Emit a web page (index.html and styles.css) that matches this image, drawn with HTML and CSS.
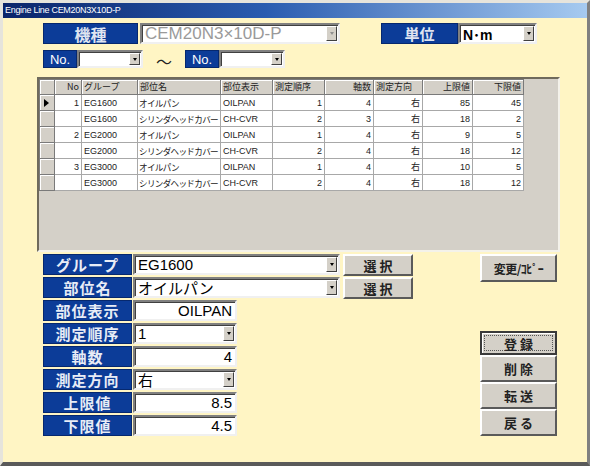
FILE: index.html
```html
<!DOCTYPE html>
<html lang="ja">
<head>
  <meta charset="UTF-8">
  <title>Engine Line</title>
  <link rel="stylesheet" href="styles.css">
</head>
<body>
  <div class="window">
    <div class="titlebar">Engine Line CEM20N3X10D-P</div>
    <div class="client">

      <!-- model / unit -->
      <div class="row-head">
        <div class="label label-model">機種</div>
        <div class="combo combo-model disabled">
          <span class="combo-text">CEM20N3×10D-P</span>
          <span class="drop"></span>
        </div>
        <div class="label label-unit">単位</div>
        <div class="combo combo-unit">
          <span class="combo-text">N･m</span>
          <span class="drop"></span>
        </div>
      </div>

      <!-- No. range -->
      <div class="row-range">
        <div class="label label-no">No.</div>
        <div class="combo combo-no"><span class="combo-text"></span><span class="drop"></span></div>
        <div class="tilde">〜</div>
        <div class="label label-no">No.</div>
        <div class="combo combo-no"><span class="combo-text"></span><span class="drop"></span></div>
      </div>

      <!-- grid -->
      <div class="grid">
        <table class="sheet">
          <colgroup>
            <col style="width:15px"><col style="width:27px"><col style="width:56px"><col style="width:83px">
            <col style="width:52px"><col style="width:52px"><col style="width:49px"><col style="width:49px">
            <col style="width:50px"><col style="width:51px">
          </colgroup>
          <thead>
            <tr>
              <th class="sel"></th>
              <th class="r">No</th>
              <th>グループ</th>
              <th>部位名</th>
              <th>部位表示</th>
              <th>測定順序</th>
              <th class="r">軸数</th>
              <th>測定方向</th>
              <th class="r">上限値</th>
              <th class="r">下限値</th>
            </tr>
          </thead>
          <tbody>
            <tr>
              <td class="sel"><span class="pointer"></span></td>
              <td class="r">1</td><td>EG1600</td><td>オイルパン</td><td>OILPAN</td>
              <td class="r">1</td><td class="r">4</td><td class="r">右</td><td class="r">85</td><td class="r">45</td>
            </tr>
            <tr>
              <td class="sel"></td>
              <td class="r"></td><td>EG1600</td><td>シリンダヘッドカバー</td><td>CH-CVR</td>
              <td class="r">2</td><td class="r">3</td><td class="r">右</td><td class="r">18</td><td class="r">2</td>
            </tr>
            <tr>
              <td class="sel"></td>
              <td class="r">2</td><td>EG2000</td><td>オイルパン</td><td>OILPAN</td>
              <td class="r">1</td><td class="r">4</td><td class="r">右</td><td class="r">9</td><td class="r">5</td>
            </tr>
            <tr>
              <td class="sel"></td>
              <td class="r"></td><td>EG2000</td><td>シリンダヘッドカバー</td><td>CH-CVR</td>
              <td class="r">2</td><td class="r">4</td><td class="r">右</td><td class="r">18</td><td class="r">12</td>
            </tr>
            <tr>
              <td class="sel"></td>
              <td class="r">3</td><td>EG3000</td><td>オイルパン</td><td>OILPAN</td>
              <td class="r">1</td><td class="r">4</td><td class="r">右</td><td class="r">10</td><td class="r">5</td>
            </tr>
            <tr>
              <td class="sel"></td>
              <td class="r"></td><td>EG3000</td><td>シリンダヘッドカバー</td><td>CH-CVR</td>
              <td class="r">2</td><td class="r">4</td><td class="r">右</td><td class="r">18</td><td class="r">12</td>
            </tr>
          </tbody>
        </table>
      </div>

      <!-- detail form -->
      <div class="detail">
        <div class="form">
          <div class="form-row">
            <div class="label label-field">グループ</div>
            <div class="combo field-wide"><span class="combo-text">EG1600</span><span class="drop"></span></div>
            <button class="btn btn-select">選 択</button>
          </div>
          <div class="form-row">
            <div class="label label-field">部位名</div>
            <div class="combo field-wide"><span class="combo-text">オイルパン</span><span class="drop"></span></div>
            <button class="btn btn-select">選 択</button>
          </div>
          <div class="form-row">
            <div class="label label-field">部位表示</div>
            <div class="textbox field-short">OILPAN</div>
          </div>
          <div class="form-row">
            <div class="label label-field">測定順序</div>
            <div class="combo field-short"><span class="combo-text">1</span><span class="drop"></span></div>
          </div>
          <div class="form-row">
            <div class="label label-field">軸数</div>
            <div class="textbox field-short">4</div>
          </div>
          <div class="form-row">
            <div class="label label-field">測定方向</div>
            <div class="combo field-short"><span class="combo-text">右</span><span class="drop"></span></div>
          </div>
          <div class="form-row">
            <div class="label label-field">上限値</div>
            <div class="textbox field-short">8.5</div>
          </div>
          <div class="form-row">
            <div class="label label-field">下限値</div>
            <div class="textbox field-short">4.5</div>
          </div>
        </div>

        <div class="actions">
          <button class="btn btn-copy">変更/ｺﾋﾟｰ</button>
          <div class="btn-stack">
            <button class="btn btn-default"><span class="focus">登 録</span></button>
            <button class="btn">削 除</button>
            <button class="btn">転 送</button>
            <button class="btn">戻 る</button>
          </div>
        </div>
      </div>

    </div>
  </div>
</body>
</html>
```

FILE: styles.css
```css
/* reset */
* {
  margin: 0;
  padding: 0;
  box-sizing: border-box;
}

body {
  background: #fff;
  font-family: "Noto Sans CJK JP", "Liberation Sans", sans-serif;
}

/* window frame */
.window {
  width: 590px;
  height: 466px;
  background: #fff5c4;
  border: 3px solid #e6e4dc;
  border-right: 3px solid #808080;
  border-bottom: 4px solid #5a5a5a;
  overflow: hidden;
}

.titlebar {
  height: 15px;
  background: linear-gradient(to right, #0a246a 0%, #2a5cb0 45%, #a6caf0 100%);
  color: #fff;
  font-family: "Liberation Sans", sans-serif;
  font-size: 9px;
  line-height: 15px;
  padding-left: 2px;
  letter-spacing: -0.3px;
}

.client {
  padding: 5px 0 0 34px;
}

/* blue captions */
.label {
  background: #0c3c98;
  color: #fff;
  font-weight: bold;
  display: flex;
  align-items: center;
  justify-content: center;
  border: 1px solid #06286e;
}

/* combo boxes and text boxes */
.combo,
.textbox {
  background: #fff;
  border: 2px solid;
  border-color: #808080 #f0f0f0 #f0f0f0 #808080;
  box-shadow: inset 1px 1px 0 #404040;
  display: flex;
  align-items: center;
  font-family: "Liberation Sans", "Noto Sans CJK JP", sans-serif;
  color: #000;
}

.combo-text {
  flex: 1;
  padding-left: 3px;
  white-space: nowrap;
  overflow: hidden;
}

.drop {
  width: 11px;
  align-self: stretch;
  margin: 1px 1px 1px 0;
  background: #d4d0c8;
  border: 1px solid;
  border-color: #fff #404040 #404040 #fff;
  display: flex;
  align-items: center;
  justify-content: center;
}

.drop::after {
  content: "";
  border-left: 2px solid transparent;
  border-right: 2px solid transparent;
  border-top: 3px solid #000;
}

.textbox {
  justify-content: flex-end;
  padding-right: 3px;
}

/* top rows */
.row-head {
  display: flex;
  height: 21px;
  margin-left: 6px;
}

.label-model {
  width: 95px;
  font-size: 16px;
  color: #dfe4f0;
}

.combo-model {
  width: 200px;
  margin-left: 2px;
  font-size: 17px;
}

.combo-model.disabled .combo-text {
  color: #9a9a9a;
}

.combo-model.disabled .drop::after {
  border-top-color: #909090;
}

.label-unit {
  width: 77px;
  margin-left: 41px;
  font-size: 15px;
  color: #dfe4f0;
}

.combo-unit {
  width: 79px;
  font-size: 14px;
  font-weight: bold;
}

.row-range {
  display: flex;
  height: 18px;
  margin: 6px 0 0 6px;
}

.label-no {
  width: 34px;
  font-size: 13px;
  font-weight: normal;
  font-family: "Liberation Sans", sans-serif;
}

.combo-no {
  width: 66px;
}

.tilde {
  width: 42px;
  text-align: center;
  font-size: 16px;
  line-height: 22px;
  color: #222;
}

/* data grid */
.grid {
  width: 523px;
  height: 175px;
  margin-top: 9px;
  background: #d4d0c8;
  border: 2px solid;
  border-color: #6f6a5c #f4f2ea #f4f2ea #6f6a5c;
}

.sheet {
  border-collapse: collapse;
  table-layout: fixed;
  width: 484px;
  font-size: 9px;
  color: #222;
}

.sheet th,
.sheet td {
  height: 16px;
  padding: 0 2px;
  border: 1px solid #a8a8a8;
  white-space: nowrap;
  overflow: hidden;
  text-align: left;
  font-weight: normal;
  line-height: 14px;
}

.sheet th {
  height: 14px;
  background: #d4d0c8;
  border-color: #7a7a7a;
  box-shadow: inset 1px 1px 0 #fff;
}

.sheet td {
  background: #fff;
  font-family: "Liberation Sans", "Noto Sans CJK JP", sans-serif;
}

.sheet td:nth-child(4) {
  font-family: "Noto Sans CJK JP", sans-serif;
  font-size: 8.6px;
  letter-spacing: -0.7px;
  padding-left: 1px;
  overflow: visible;
}

.sheet .r {
  text-align: right;
}

.sheet .sel {
  background: #d4d0c8;
  border-color: #7a7a7a;
  box-shadow: inset 1px 1px 0 #fff;
  padding: 0;
}

.pointer {
  display: block;
  width: 0;
  height: 0;
  margin-left: 4px;
  border-top: 4px solid transparent;
  border-bottom: 4px solid transparent;
  border-left: 5px solid #000;
}

/* lower form */
.detail {
  display: flex;
  margin: 2px 0 0 6px;
}

.form {
  display: flex;
  flex-direction: column;
  gap: 2px;
}

.form-row {
  display: flex;
  height: 21px;
}

.label-field {
  width: 89px;
  font-size: 15px;
  color: #e8ecf6;
  letter-spacing: 1px;
}

.form-row .combo,
.form-row .textbox {
  margin-left: 1px;
  font-size: 15px;
}

.field-wide {
  width: 207px;
}

.field-short {
  width: 104px;
}

.field-wide .combo-text,
.field-short .combo-text {
  font-size: 15px;
}

/* buttons */
.btn {
  background: #d4d0c8;
  border: 2px solid;
  border-color: #fff #5a5a5a #5a5a5a #fff;
  font-family: "Noto Sans CJK JP", sans-serif;
  font-size: 13px;
  font-weight: bold;
  color: #222;
  cursor: pointer;
}

.btn-select {
  width: 70px;
  margin-left: 3px;
  height: 22px;
}

.actions {
  display: flex;
  flex-direction: column;
  margin-left: 67px;
  width: 77px;
}

.btn-copy {
  height: 28px;
  font-size: 12px;
  letter-spacing: -0.5px;
}

.btn-stack {
  display: flex;
  flex-direction: column;
  margin-top: 49px;
}

.btn-stack .btn {
  height: 27px;
}

.btn-stack .btn-default {
  height: 24px;
  border: 2px solid #3a3a3a;
  box-shadow: inset 1px 1px 0 #fff;
  padding: 2px;
}

.focus {
  display: flex;
  align-items: center;
  justify-content: center;
  height: 100%;
  border: 1px dotted #555;
}
```
